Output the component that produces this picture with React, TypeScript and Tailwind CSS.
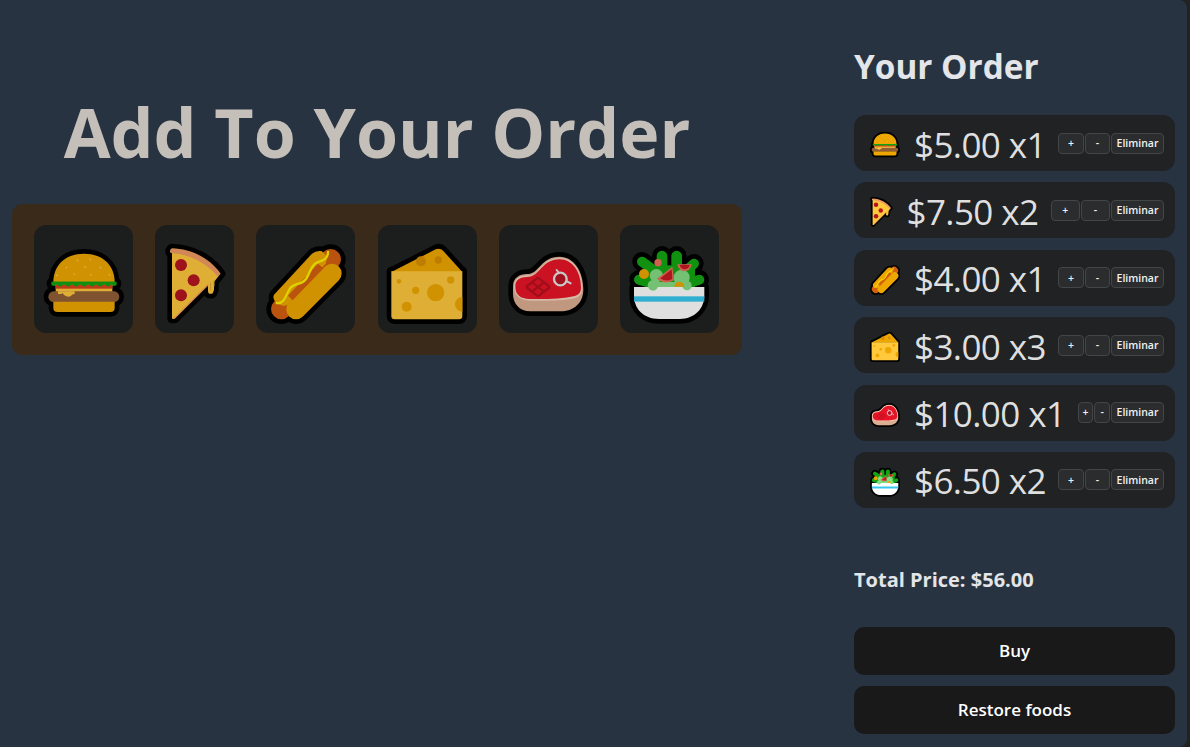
import type { ReactNode } from "react";

type CapsuleProps = {
  x1: number;
  y1: number;
  x2: number;
  y2: number;
  w: number;
  fill: string;
};

// pill between two points, so the black outline pass can stroke it
function Capsule({ x1, y1, x2, y2, w, fill }: CapsuleProps) {
  const cx = (x1 + x2) / 2;
  const cy = (y1 + y2) / 2;
  const len = Math.hypot(x2 - x1, y2 - y1) + w;
  const deg = (Math.atan2(y2 - y1, x2 - x1) * 180) / Math.PI;
  return (
    <rect
      x={cx - len / 2}
      y={cy - w / 2}
      width={len}
      height={w}
      rx={w / 2}
      fill={fill}
      transform={`rotate(${deg} ${cx} ${cy})`}
    />
  );
}

type FoodArt = {
  box: [number, number, number, number];
  base: ReactNode;
  details: ReactNode;
};

const burger: FoodArt = {
  box: [130, 116, 240, 240],
  base: (
    <>
      <path d="M158 245C158 195 195 160 250 160C305 160 342 195 342 245Z" fill="#EEA700" />
      <rect x="152" y="244" width="196" height="12" rx="5" fill="#11A311" />
      <rect x="165" y="250" width="170" height="30" fill="#FFC83D" />
      <Capsule x1={159} y1={289} x2={340} y2={289} w={32} fill="#915E37" />
      <path d="M158 304H342V322Q342 335 329 335H171Q158 335 158 322Z" fill="#EEA700" />
    </>
  ),
  details: (
    <>
      <g stroke="#FBD77A" strokeWidth="3" strokeLinecap="round">
        <path d="M229 178l3 4M268 176l2 3M199 200l-3 3M252 198l3 4M298 200l3 4M220 220l3 3M272 222l-3 3M325 222l3 3M170 224l-3 2" />
      </g>
      <rect x="165" y="252" width="170" height="13" fill="#D9431E" />
      <path
        d="M152 244H348L343 256L332 252L322 259L310 252L298 259L286 252L274 259L262 252L250 259L238 252L226 259L214 252L202 259L190 252L178 259L166 252L157 256Z"
        fill="#11A311"
      />
      <path d="M172 273H222V281Q216 281 214 284Q205 294 190 284L186 278L182 281H172Z" fill="#FFC83D" />
    </>
  ),
};

const pizza: FoodArt = {
  box: [493, 116, 180, 240],
  base: (
    <>
      <path
        d="M514 152C570 155 625 185 658 222L640 245V268Q636 283 630 280Q622 283 622 270V255L522 355H514Z"
        fill="#FFC83D"
      />
      <path d="M514 144C575 146 630 176 660 220L650 228C620 190 570 162 510 158Q504 150 514 144Z" fill="#F09C62" />
    </>
  ),
  details: (
    <>
      <path d="M622 250L520 352L516 355H522L624 254Z" fill="#F09C62" />
      <circle cx="541" cy="194" r="18" fill="#B5141F" />
      <circle cx="579" cy="240" r="18" fill="#B5141F" />
      <circle cx="541" cy="285" r="18" fill="#B5141F" />
      <path d="M630 246V270M640 240V258" stroke="#DFA52E" strokeWidth="3" />
    </>
  ),
};

const hotdog: FoodArt = {
  box: [796, 116, 240, 240],
  base: (
    <>
      <Capsule x1={842} y1={326} x2={990} y2={177} w={62} fill="#D35F10" />
      <path d="M820 283L934 160Q945 150 962 152Q985 165 975 190L860 315Q840 320 825 305Q815 295 820 283Z" fill="#EEA700" />
      <Capsule x1={886} y1={328} x2={994} y2={219} w={58} fill="#EEA700" />
    </>
  ),
  details: (
    <>
      <path d="M862 286L952 190L968 204L876 300Z" fill="#D35F10" />
      <path
        d="M828 308C852 312 856 282 868 264C882 246 902 256 916 236C930 216 930 194 950 186C968 180 982 176 982 155"
        fill="none"
        stroke="#FFF000"
        strokeWidth="7"
        strokeLinecap="round"
      />
    </>
  ),
};

const cheese: FoodArt = {
  box: [51, 116, 240, 240],
  base: (
    <>
      <path d="M64 215L197 147Q210 141 220 152L277 215Z" fill="#EEA700" />
      <path d="M64 213H277V347Q277 357 267 357H74Q64 357 64 347Z" fill="#FFC83D" />
    </>
  ),
  details: (
    <>
      <circle cx="153" cy="183" r="15" fill="#D88F00" />
      <circle cx="205" cy="179" r="11" fill="#D88F00" />
      <g fill="#EEA700">
        <circle cx="197" cy="277" r="26" />
        <circle cx="110" cy="319" r="15" />
        <circle cx="137" cy="270" r="11" />
        <circle cx="87" cy="243" r="7" />
        <circle cx="242" cy="239" r="11" />
        <path d="M277 290A22 22 0 0 0 277 334Z" />
      </g>
    </>
  ),
};

const steak: FoodArt = {
  box: [415, 116, 240, 240],
  base: (
    <path
      d="M430 258C430 232 450 221 472 221C510 221 512 169 570 169C612 169 641 212 641 268C641 308 612 333 572 333H482C450 333 430 310 430 280Z"
      fill="#DBAD91"
    />
  ),
  details: (
    <>
      <path
        d="M433 258C433 234 452 225 472 225C512 225 514 172 570 172C610 172 638 212 638 262C638 280 630 290 615 294C580 302 520 302 480 301C450 300 433 285 433 258Z"
        fill="#F5D3BD"
      />
      <path
        d="M437 258C437 238 452 230 472 230C512 230 515 177 570 177C608 177 634 215 634 262C634 275 628 283 615 287C580 296 520 297 480 296C452 295 437 285 437 258Z"
        fill="#E71428"
      />
      <circle cx="572" cy="236" r="19" fill="#B91422" stroke="#E4E4E4" strokeWidth="7" />
      <path d="M561 209L568 218M592 243L603 249" stroke="#E4E4E4" strokeWidth="6" strokeLinecap="round" />
      <path
        d="M505 232l36 28M487 246l36 28M469 260l36 28M505 232l-36 28M523 246l-36 28M541 260l-36 28"
        stroke="#B8101E"
        strokeWidth="7"
        fill="none"
      />
    </>
  ),
};

const salad: FoodArt = {
  box: [778, 116, 240, 240],
  base: (
    <>
      <Capsule x1={817} y1={184} x2={860} y2={215} w={30} fill="#12A712" />
      <Capsule x1={877} y1={167} x2={877} y2={215} w={32} fill="#12A712" />
      <Capsule x1={921} y1={167} x2={921} y2={210} w={32} fill="#12A712" />
      <Capsule x1={973} y1={190} x2={935} y2={225} w={30} fill="#12A712" />
      <Capsule x1={808} y1={238} x2={850} y2={250} w={30} fill="#12A712" />
      <Capsule x1={989} y1={238} x2={950} y2={250} w={30} fill="#12A712" />
      <rect x="826" y="195" width="150" height="67" fill="#12A712" />
      <path d="M793 260H1004V285C1004 325 975 356 930 356H868C820 356 793 325 793 285Z" fill="#FFFFFF" />
    </>
  ),
  details: (
    <>
      <g fill="#84DC84">
        <circle cx="860" cy="226" r="20" />
        <circle cx="936" cy="232" r="24" />
        <circle cx="850" cy="255" r="16" />
        <circle cx="952" cy="256" r="14" />
        <rect x="850" y="245" width="100" height="15" />
      </g>
      <circle cx="823" cy="221" r="15" fill="#EEA700" />
      <circle cx="865" cy="187" r="11" fill="#EE6E5C" />
      <path d="M914 259A15 15 0 0 1 944 259Z" fill="#EEA700" />
      <path d="M908 199L913 240Q885 255 862 235Z" fill="#EE6E5C" />
      <path d="M906 207L908 236Q888 246 872 234Z" fill="#C41A22" />
      <path d="M922 192H967Q960 213 944 213Q928 213 922 192Z" fill="#EE6E5C" />
      <path d="M930 194H961Q956 207 945 207Q934 207 930 194Z" fill="#C41A22" />
      <rect x="793" y="288" width="211" height="16" fill="#38C8EE" />
    </>
  ),
};

function FoodIcon({ art, size }: { art: FoodArt; size: number }) {
  const [x, y, w, h] = art.box;
  return (
    <svg
      viewBox={`${x} ${y} ${w} ${h}`}
      width={(size * w) / h}
      height={size}
      className="block shrink-0 overflow-visible"
    >
      <g stroke="#000" strokeWidth="28" strokeLinejoin="round">
        {art.base}
      </g>
      {art.base}
      {art.details}
    </svg>
  );
}

const foods = [burger, pizza, hotdog, cheese, steak, salad];

const orders = [
  { art: burger, price: "$5.00", qty: 1 },
  { art: pizza, price: "$7.50", qty: 2 },
  { art: hotdog, price: "$4.00", qty: 1 },
  { art: cheese, price: "$3.00", qty: 3 },
  { art: steak, price: "$10.00", qty: 1 },
  { art: salad, price: "$6.50", qty: 2 },
];

const smallBtn =
  "h-[21px] rounded-[4px] border border-[#434547] bg-[#2a2c2e] text-[10.5px] font-semibold leading-none text-[#f2f2f2]";

export default function App() {
  return (
    <div
      className="h-[747px] w-[1190px] overflow-hidden bg-[#222222]"
      style={{ fontFamily: '"Open Sans", sans-serif' }}
    >
      <main className="flex h-[747px] w-[1187px] rounded-r-lg bg-[#273341]">
        <section className="w-[754px] pl-3 pt-[94px]">
          <h1 className="w-[730px] text-center text-[68px] font-bold leading-[76px] text-[#c5bfb9]">
            Add To Your Order
          </h1>

          <div className="mt-[34px] flex h-[151px] w-[730px] items-start gap-[22.2px] rounded-[10px] bg-[#3a2a1a] pl-[22px] pt-[21px]">
            {foods.map((art, i) => (
              <div
                key={i}
                className="flex h-[108px] items-center justify-center rounded-xl bg-[#1c1e1e] px-[9.5px]"
              >
                <div className="brightness-[.875]">
                  <FoodIcon art={art} size={80} />
                </div>
              </div>
            ))}
          </div>
        </section>

        <aside className="ml-[100px] w-[321px] pt-[43px]">
          <h2 className="text-[33.3px] font-bold leading-[46px] text-[#e3e5e8]">
            Your Order
          </h2>

          <div className="mt-[26px] flex flex-col gap-[11.4px]">
            {orders.map((o) => (
              <div
                key={o.price}
                className="flex h-[56px] items-center rounded-xl bg-[#202224] pl-4 pr-[11px] text-[#dfdfdf]"
              >
                <FoodIcon art={o.art} size={30} />
                <span className="ml-[14px] whitespace-nowrap pt-[2px] text-[35px] leading-none tracking-[-0.6px]">
                  {o.price} x{o.qty}
                </span>
                <div className="ml-[12.4px] flex flex-1 gap-px">
                  <button className={`${smallBtn} flex-1`}>+</button>
                  <button className={`${smallBtn} flex-1`}>-</button>
                  <button className={`${smallBtn} w-[53px] shrink-0`}>Eliminar</button>
                </div>
              </div>
            ))}
          </div>

          <p className="mt-[58px] text-[20px] font-bold leading-[28px] text-[#e3e5e8]">
            Total Price: $56.00
          </p>

          <div className="mt-[33px] flex flex-col gap-[11px]">
            <button className="h-12 rounded-[10px] bg-[#191919] text-[17px] font-semibold text-white">
              Buy
            </button>
            <button className="h-12 rounded-[10px] bg-[#191919] text-[17px] font-semibold text-white">
              Restore foods
            </button>
          </div>
        </aside>
      </main>
    </div>
  );
}
